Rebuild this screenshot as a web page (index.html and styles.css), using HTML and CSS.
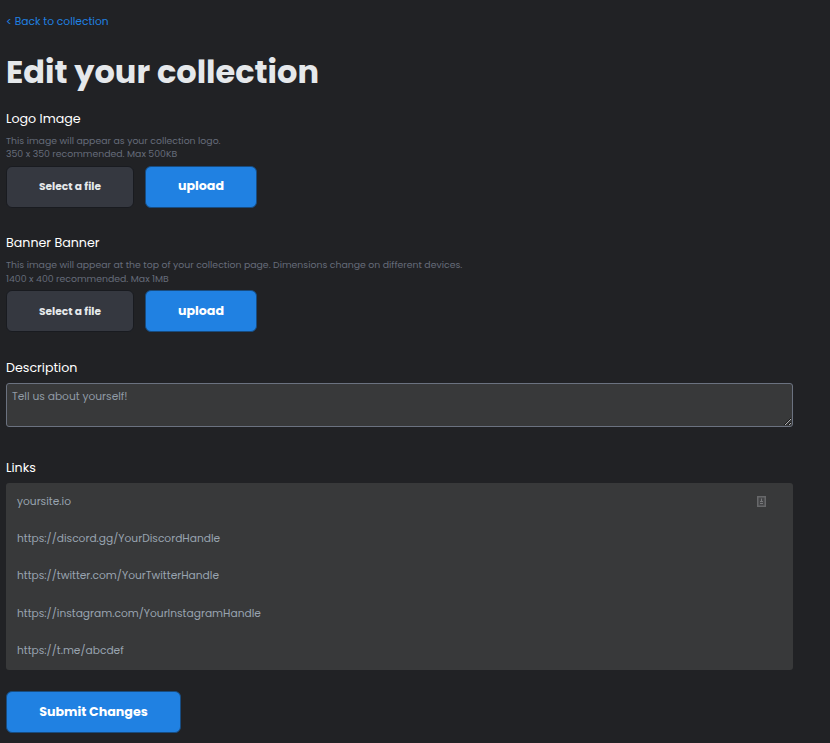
FILE: index.html
```
<!DOCTYPE html>
<html lang="en">
<head>
<meta charset="utf-8">
<title>Edit your collection</title>
<link rel="stylesheet" href="styles.css">
</head>
<body>
<main class="page">
  <a class="back">&lt; Back to collection</a>
  <h1 class="title">Edit your collection</h1>

  <section class="group upload-group">
    <h2 class="label">Logo Image</h2>
    <p class="hint">This image will appear as your collection logo.<br>350 x 350 recommended. Max 500KB</p>
    <div class="actions">
      <button class="btn btn-file">Select a file</button>
      <button class="btn btn-upload">upload</button>
    </div>
  </section>

  <section class="group upload-group banner-group">
    <h2 class="label">Banner Banner</h2>
    <p class="hint">This image will appear at the top of your collection page. Dimensions change on different devices.<br>1400 x 400 recommended. Max 1MB</p>
    <div class="actions">
      <button class="btn btn-file">Select a file</button>
      <button class="btn btn-upload">upload</button>
    </div>
  </section>

  <section class="group description">
    <h2 class="label">Description</h2>
    <textarea class="about" placeholder="Tell us about yourself!"></textarea>
  </section>

  <section class="group links">
    <h2 class="label">Links</h2>
    <div class="link-list">
      <div class="link-row"><span>yoursite.io</span>
        <svg class="autofill" width="9" height="11" viewBox="0 0 9 11"><rect x=".75" y=".75" width="7.5" height="9.5" fill="#444547" stroke="#67686a" stroke-width="1.5"/><path d="M4.5 2.5v3M3 5.5h3M3 7.5h3" stroke="#77787a" stroke-width="1" fill="none"/></svg>
      </div>
      <div class="link-row"><span>https://discord.gg/YourDiscordHandle</span></div>
      <div class="link-row"><span>https://twitter.com/YourTwitterHandle</span></div>
      <div class="link-row row-instagram"><span>https://instagram.com/YourInstagramHandle</span></div>
      <div class="link-row"><span>https://t.me/abcdef</span></div>
    </div>
  </section>

  <button class="btn btn-submit">Submit Changes</button>
</main>
</body>
</html>
```
FILE: styles.css
```
* { box-sizing: border-box; }
body {
  margin: 0;
  min-height: 743px;
  background: #212225;
  color: #e5e8eb;
  font-family: Poppins, Inter, "Open Sans", sans-serif;
  font-size: 10.667px;
}
.page {
  display: flex;
  flex-direction: column;
  align-items: flex-start;
  width: 793px;
  padding: 14px 0 0 6px;
}
.back { height: 16px; line-height: 16px; color: #2081e2; }
.title { margin: 18px 0 0; height: 48px; line-height: 48px; font-size: 32px; font-weight: 700; }
.group { width: 100%; }
.upload-group { height: 124px; }
.title + .upload-group { margin-top: 12px; }
.label { margin: 0; height: 20px; line-height: 21px; font-size: 12.667px; font-weight: 400; color: #fff; }
.banner-group .label { line-height: 22px; }
.hint { margin: 6px 0 0; height: 27px; line-height: 13px; font-size: 9.333px; color: #666c7a; white-space: nowrap; }
.banner-group .hint { line-height: 14px; height: 27px; }
.actions { display: flex; gap: 11px; margin-top: 5px; }
.btn {
  height: 42px;
  padding: 0 0 2px;
  border: 1px solid #184c80;
  border-radius: 6px;
  background: #2081e2;
  color: #fff;
  font: inherit;
  font-size: 12.667px;
  font-weight: 700;
  white-space: nowrap;
}
.btn-file { width: 128px; padding-bottom: 1px; font-size: 10.667px; background: #353840; border-color: #191b20; color: #e5e8eb; }
.btn-upload { width: 112px; }
.banner-group .btn { padding-bottom: 0; }
.banner-group .btn-file { padding: 1px 0 0; }
.description { height: 100px; margin-top: 1px; }
.about {
  display: block;
  width: 787px;
  height: 44px;
  margin-top: 6px;
  padding: 4px 5px;
  border: 1px solid #6b7280;
  border-radius: 3px;
  background: #38393a;
  color: #fff;
  font: inherit;
  line-height: 17px;
  resize: vertical;
}
.about::placeholder { color: #919ba6; opacity: 1; }
.link-list { margin-top: 6px; height: 187px; border-radius: 3px; background: #38393a; color: #98a4b0; }
.link-row { display: flex; align-items: center; justify-content: space-between; height: 37.25px; padding: 0 27px 0 11px; }
.row-instagram { padding-top: 1px; }
.btn-submit { width: 175px; margin-top: 21px; padding-bottom: 1px; }
```
